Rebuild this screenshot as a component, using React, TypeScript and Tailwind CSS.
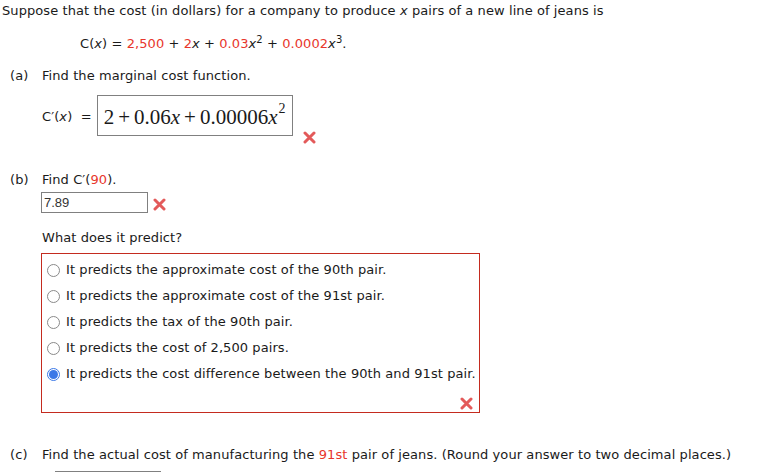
import React from "react";

const Red = ({ children }: { children: React.ReactNode }) => (
  <span className="text-[#e8362c]">{children}</span>
);

const XMark = ({ className = "" }: { className?: string }) => (
  <svg width="13" height="13" viewBox="0 0 13 13" className={className}>
    <path d="M2 2 L11 11 M11 2 L2 11" stroke="#e35a5a" strokeWidth="3" strokeLinecap="round" />
  </svg>
);

const Radio = ({ checked }: { checked?: boolean }) =>
  checked ? (
    <span className="w-[13px] h-[13px] rounded-full border border-[#3b78e7] flex items-center justify-center bg-white shrink-0">
      <span className="w-[9px] h-[9px] rounded-full bg-[#3b78e7]" />
    </span>
  ) : (
    <span className="w-[13px] h-[13px] rounded-full border border-[#8a8a8a] bg-white shrink-0" />
  );

export default function App() {
  const options = [
    "It predicts the approximate cost of the 90th pair.",
    "It predicts the approximate cost of the 91st pair.",
    "It predicts the tax of the 90th pair.",
    "It predicts the cost of 2,500 pairs.",
    "It predicts the cost difference between the 90th and 91st pair.",
  ];
  return (
    <div
      className="w-[760px] h-[472px] overflow-hidden bg-white text-[13px] leading-[18px] tracking-[0.08px] text-[#1a1a1a]"
      style={{ fontFamily: '"DejaVu Sans", Verdana, sans-serif' }}
    >
      <div className="pl-[2px] pt-[2px]">
        Suppose that the cost (in dollars) for a company to produce <i>x</i> pairs of a new line of jeans is
      </div>
      <div className="pl-[80px] mt-[15px]">
        C(<i>x</i>) = <Red>2,500</Red> + <Red>2</Red><i>x</i> + <Red>0.03</Red><i>x</i>
        <sup className="text-[10px]">2</sup> + <Red>0.0002</Red><i>x</i>
        <sup className="text-[10px]">3</sup>.
      </div>
      <div className="flex pl-[10px] mt-[14px]">
        <span className="w-[32px]">(a)</span>
        <span>Find the marginal cost function.</span>
      </div>
      <div className="flex pl-[42px] mt-[10px]">
        <span className="mt-[13px] mr-[5px]">
          C′(<i>x</i>)&nbsp;&nbsp;=
        </span>
        <div
          className="w-[196px] h-[41px] border border-[#808080] flex items-center pl-[6px] pt-[3px] text-[21px] leading-none tracking-normal whitespace-nowrap"
          style={{ fontFamily: '"Liberation Serif", "Times New Roman", serif' }}
        >
          <span>2</span>
          <span className="mx-[4px]">+</span>
          <span>0.06</span>
          <i>x</i>
          <span className="mx-[4px]">+</span>
          <span>0.00006</span>
          <i>x</i>
          <sup className="text-[14px] relative -top-[8px] ml-[1px]">2</sup>
        </div>
        <XMark className="ml-[10px] mt-[36px]" />
      </div>
      <div className="flex pl-[10px] mt-[27px]">
        <span className="w-[32px]">(b)</span>
        <span>
          Find C′(<Red>90</Red>).
        </span>
      </div>
      <div className="flex items-center pl-[41px] mt-[3px]">
        <div
          className="w-[107px] h-[21px] border border-[#808080] pl-[2px] text-[13px] leading-[19px] tracking-normal text-[#333]"
          style={{ fontFamily: '"Liberation Sans", Arial, sans-serif' }}
        >
          7.89
        </div>
        <XMark className="ml-[5px] mt-[4px]" />
      </div>
      <div className="pl-[42px] mt-[16px]">What does it predict?</div>
      <div className="ml-[41px] mt-[6px] w-[439px] h-[160px] border border-[#c42b1f] pt-[3px] pl-[5px] flex flex-col">
        {options.map((o, i) => (
          <label key={i} className="flex items-center gap-[6px] h-[26px]">
            <Radio checked={i === 4} />
            <span>{o}</span>
          </label>
        ))}
        <div className="flex justify-end pr-[6px] mt-[10px]">
          <XMark />
        </div>
      </div>
      <div className="flex pl-[10px] mt-[33px]">
        <span className="w-[32px]">(c)</span>
        <span>
          Find the actual cost of manufacturing the <Red>91st</Red> pair of jeans. (Round your answer to two decimal places.)
        </span>
      </div>
      <div className="ml-[55px] mt-[7px] w-[106px] h-[21px] border border-[#808080]" />
    </div>
  );
}
